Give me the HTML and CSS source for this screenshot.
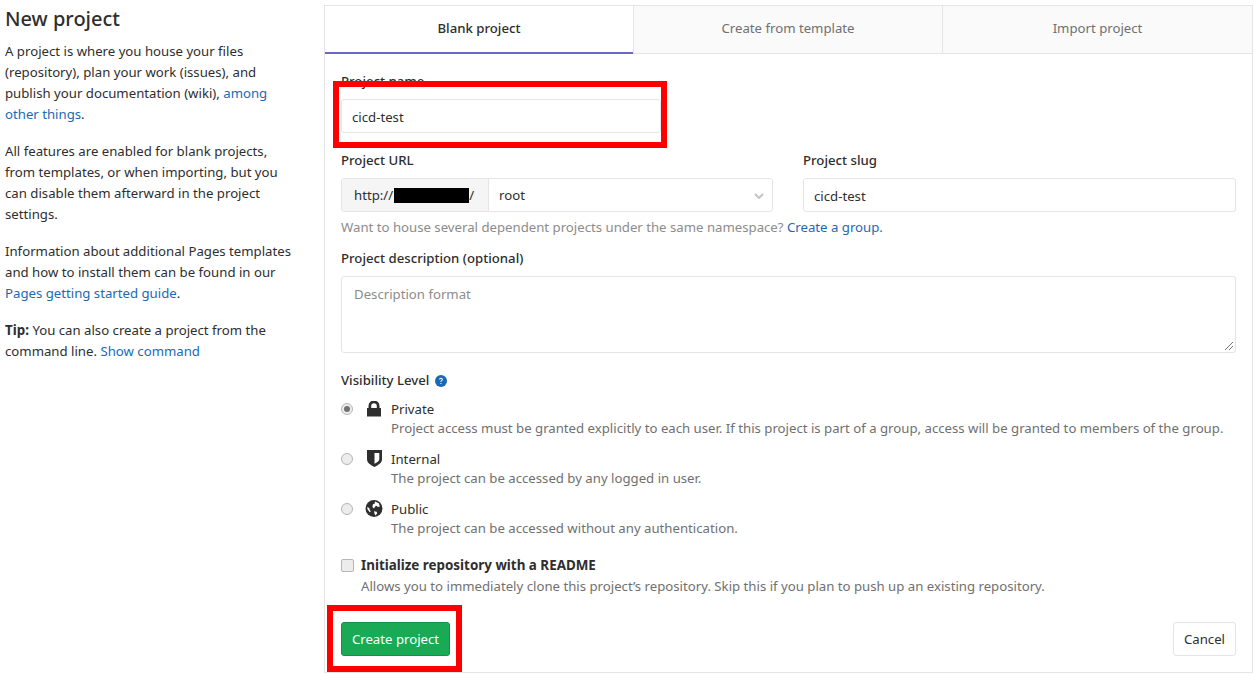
FILE: index.html
```html
<!DOCTYPE html>
<html lang="en">
<head>
<meta charset="utf-8">
<title>New project</title>
<link rel="stylesheet" href="styles.css">
</head>
<body>
<div class="page">
  <aside class="intro">
    <h1>New project</h1>
    <p>A project is where you house your files (repository), plan your work (issues), and publish your documentation (wiki), <a href="#">among other things</a>.</p>
    <p>All features are enabled for blank projects, from templates, or when importing, but you can disable them afterward in the project settings.</p>
    <p>Information about additional Pages templates and how to install them can be found in our <a href="#">Pages getting started guide</a>.</p>
    <p><b class="tip">Tip:</b> You can also create a project from the command line. <a href="#">Show command</a></p>
  </aside>
  <main class="panel">
    <nav class="tabs">
      <div class="tab active">Blank project</div>
      <div class="tab middle">Create from template</div>
      <div class="tab">Import project</div>
    </nav>
    <form class="form">
      <div class="name-field">
        <label class="label">Project name</label>
        <div class="input name-input">cicd-test</div>
        <div class="mark mark-name"></div>
      </div>
      <div class="url-row">
        <div class="url-col">
          <label class="label">Project URL</label>
          <div class="url-group">
            <div class="url-prefix">http://<span class="redact"></span>/</div>
            <div class="url-select">root
              <svg class="chev" width="10" height="6" viewBox="0 0 10 6"><path d="M1 1l4 4 4-4" fill="none" stroke="#c4c4c4" stroke-width="2"/></svg>
            </div>
          </div>
        </div>
        <div class="slug-col">
          <label class="label">Project slug</label>
          <div class="input">cicd-test</div>
        </div>
      </div>
      <p class="hint">Want to house several dependent projects under the same namespace? <a href="#">Create a group.</a></p>
      <label class="label desc-label">Project description (optional)</label>
      <div class="textarea">Description format
        <svg class="grip" width="10" height="10" viewBox="0 0 10 10"><path d="M1 9l8-8M5 9l4-4" stroke="#777" stroke-width="1"/></svg>
      </div>
      <div class="vis-title"><span class="label">Visibility Level</span>
        <svg width="12" height="12" viewBox="0 0 12 12"><circle cx="6" cy="6" r="6" fill="#1b69b6"/><path d="M4.100 4.600c0-1.100.9-1.800 1.900-1.800s1.900.7 1.900 1.700c0 1.400-1.600 1.300-1.600 2.600H5.400c0-1.900 1.400-1.800 1.400-2.600 0-.4-.3-.7-.8-.7s-.8.3-.8.8zM5.400 7.900h1v1.200h-1z" fill="#fff"/></svg>
      </div>
      <div class="vis-option">
        <span class="radio checked"></span>
        <span class="icon-slot lock-slot"><svg width="14" height="16" viewBox="0 0 14 16"><path d="M0 7h1.500V5a5.500 5.500 0 0 1 11 0v2H14v8.500H0zM4.200 7h5.600V5a2.800 2.800 0 0 0-5.600 0z" fill="#2e2e2e" fill-rule="evenodd"/></svg></span>
        <div class="vis-text"><div class="vis-name">Private</div><div class="vis-desc">Project access must be granted explicitly to each user. If this project is part of a group, access will be granted to members of the group.</div></div>
      </div>
      <div class="vis-option">
        <span class="radio"></span>
        <span class="icon-slot"><svg width="15" height="17" viewBox="0 0 15 17"><path d="M0 0h15v9.500c0 3-3.500 5.500-7.500 7.500C3.500 15 0 12.500 0 9.500zM7.500 3v10.800c2.500-1.300 4.800-2.800 4.800-4.500V3z" fill="#2e2e2e" fill-rule="evenodd"/></svg></span>
        <div class="vis-text"><div class="vis-name">Internal</div><div class="vis-desc">The project can be accessed by any logged in user.</div></div>
      </div>
      <div class="vis-option">
        <span class="radio"></span>
        <span class="icon-slot"><svg width="18" height="17" viewBox="0 0 16 16"><circle cx="8" cy="8" r="8" fill="#2e2e2e"/><path d="M9 1.500l3.500 1.500 1 3-2 .5-1-1-1.500.5-1 2-1.500-1.500.5-2.500 1.500-.5zM8 10.500l2.500.5.5 1.500-1.500 2-1-1.500zM1.500 6.500l2 1 .5 2 1 1-1 1-2-2.500z" fill="#fff"/></svg></span>
        <div class="vis-text"><div class="vis-name">Public</div><div class="vis-desc">The project can be accessed without any authentication.</div></div>
      </div>
      <div class="readme">
        <span class="checkbox"></span>
        <div><div class="readme-title">Initialize repository with a README</div><div class="vis-desc">Allows you to immediately clone this project’s repository. Skip this if you plan to push up an existing repository.</div></div>
      </div>
      <div class="actions">
        <div class="create-wrap">
          <button type="button" class="btn btn-create">Create project</button>
          <div class="mark mark-create"></div>
        </div>
        <button type="button" class="btn btn-cancel">Cancel</button>
      </div>
    </form>
  </main>
</div>
</body>
</html>
```

FILE: styles.css
```css
* { box-sizing: border-box; }
html, body { margin: 0; padding: 0; background: #fff; }
body {
  font-family: "Noto Sans", "Open Sans", sans-serif;
  font-size: 13.2px;
  line-height: 21px;
  color: #2e2e2e;
  height: 678px;
  overflow: hidden;
}
a { color: #1b69b6; text-decoration: none; }
.page { display: flex; padding: 5px 2px 0 5px; }
.intro { width: 288px; margin-right: 31px; flex: none; }
.intro h1 { font-size: 20px; line-height: 28px; font-weight: 500; margin: 0 0 8px; color: #2e2e2e; }
.intro p { margin: 0 0 16px; }
.tip { font-weight: 700; font-size: 13.4px; }
.panel { flex: 1; height: 668px; border: 1px solid #e5e5e5; }
.tabs { display: flex; height: 48px; }
.tab {
  flex: 1; display: flex; align-items: center; justify-content: center;
  background: #fafafa; color: #707070; padding-bottom: 2px;
  border-bottom: 1px solid #e5e5e5; border-left: 1px solid #e5e5e5;
}
.tab.active { flex: none; width: 308px; background: #fff; color: #2e2e2e; font-weight: 500; border-left: 0; border-bottom: 2px solid #6b66c9; }
.tab.middle { flex: none; width: 309px; }
.form { padding: 17px 16px 0; }
.label { display: block; font-weight: 500; line-height: 20px; color: #2e2e2e; }
.name-field { position: relative; }
.input {
  height: 34px; border: 1px solid #e5e5e5; border-radius: 3px;
  padding: 2px 10px 0; display: flex; align-items: center; background: #fff;
}
.name-input { width: 320px; margin-top: 8px; }
.mark { position: absolute; border: 6px solid #f00; pointer-events: none; }
.mark-name { left: -8px; top: 10px; width: 334px; height: 67px; }
.url-row { display: flex; gap: 30px; margin-top: 17px; }
.url-col { width: 432px; }
.slug-col { flex: 1; }
.url-row .label { margin-bottom: 8px; }
.url-group { display: flex; height: 34px; border: 1px solid #e5e5e5; border-radius: 3px; }
.url-prefix {
  width: 147px; flex: none; background: #f5f5f5; color: #2e2e2e; border-right: 1px solid #e5e5e5;
  padding: 1px 0 0 12px; display: flex; align-items: center;
}
.redact { width: 75px; height: 15px; margin-left: 1px; background: #000; }
.url-select { flex: 1; position: relative; padding-left: 10px; display: flex; align-items: center; }
.chev { position: absolute; right: 8px; top: 14px; }
.hint { margin: 5px 0 0; color: #8c8c8c; }
.desc-label { margin-top: 10px; }
.textarea {
  position: relative; height: 77px; margin-top: 8px; border: 1px solid #e5e5e5; border-radius: 3px;
  padding: 7px 12px; color: #8c8c8c;
}
.grip { position: absolute; right: 1px; bottom: 1px; }
.vis-title { display: flex; align-items: center; gap: 6px; margin-top: 17px; }
.vis-title svg { margin-top: 1px; }
.vis-option { display: flex; height: 50px; padding-top: 10px; }
.radio {
  flex: none; width: 12px; height: 12px; border-radius: 50%; border: 1px solid #b5b5b5; background: #ececec;
  margin-top: 3px; margin-right: 12px; display: flex; align-items: center; justify-content: center;
}
.radio.checked::after { content: ""; width: 6px; height: 6px; border-radius: 50%; background: #707070; }
.icon-slot { flex: none; width: 18px; height: 18px; margin-right: 8px; display: flex; justify-content: center; align-items: flex-start; }
.lock-slot { padding-top: 1px; }
.vis-text { line-height: 19px; }
.vis-name { color: #2e2e2e; }
.vis-desc { color: #707070; line-height: 21px; white-space: nowrap; }
.vis-text .vis-desc { line-height: 19px; }
.readme { display: flex; margin-top: 15px; }
.checkbox { flex: none; width: 13px; height: 13px; border: 1px solid #b5b5b5; border-radius: 2px; background: #ececec; margin: 4px 7px 0 0; }
.readme-title { font-weight: 700; font-size: 13.4px; line-height: 21px; }
.actions { display: flex; justify-content: space-between; margin-top: 25px; }
.create-wrap { position: relative; }
.btn { height: 34px; border-radius: 3px; font: inherit; padding: 0; white-space: nowrap; }
.btn-create { width: 109px; background: #1aaa55; border: 1px solid #168f48; color: #fff; }
.btn-cancel { width: 63px; background: #fff; border: 1px solid #e5e5e5; color: #2e2e2e; }
.mark-create { left: -14px; top: -17px; width: 135px; height: 67px; }
```
